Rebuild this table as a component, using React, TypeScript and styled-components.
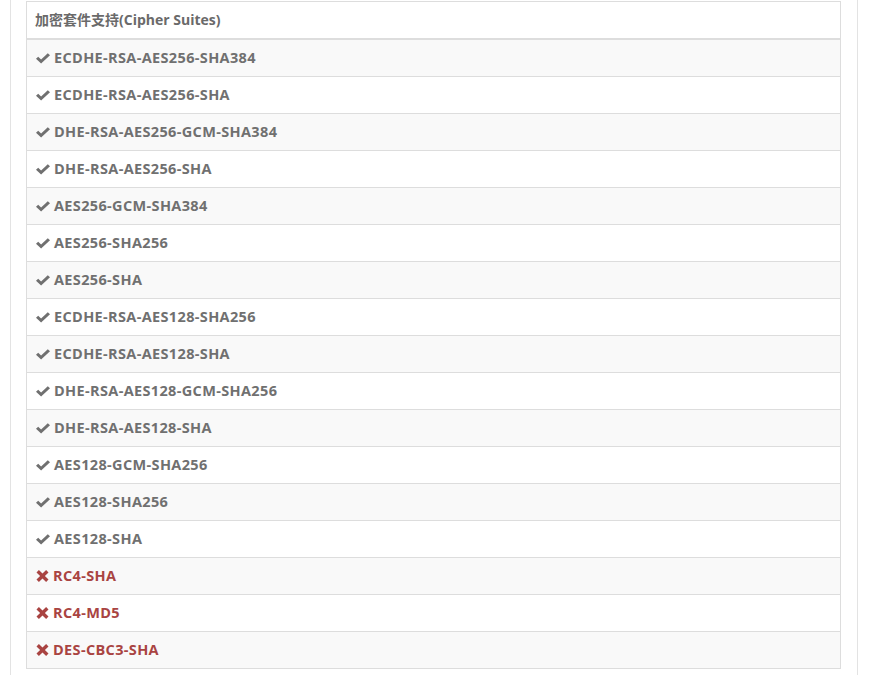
import React from "react";
import styled, { createGlobalStyle } from "styled-components";

const Global = createGlobalStyle`
  html, body { margin: 0; padding: 0; background: #fff; }
  body { font-family: "Open Sans", "Noto Sans CJK SC", sans-serif; }
`;

const Panel = styled.div`
  box-sizing: border-box;
  margin-left: 10px;
  width: 848px;
  min-height: 675px;
  border-left: 1px solid #e3e3e3;
  border-right: 1px solid #e3e3e3;
  padding: 1px 16px 0 15px;
`;

const Table = styled.table`
  width: 815px;
  border-collapse: collapse;
  border: 1px solid #ddd;
  font-size: 14.5px;
  line-height: 20px;
`;

const Th = styled.th`
  text-align: left;
  padding: 8px 8px;
  height: 20px;
  border: 1px solid #ddd;
  border-bottom: 2px solid #ddd;
  font-size: 14px;
  font-weight: 700;
  color: #6a6a6a;
  background: #fff;
`;

const Row = styled.tr<{ $striped: boolean }>`
  background: ${(p) => (p.$striped ? "#f9f9f9" : "#fff")};
`;

const Td = styled.td<{ $bad: boolean }>`
  padding: 8px 9px;
  border: 1px solid #ddd;
  font-weight: 700;
  letter-spacing: 0.35px;
  color: ${(p) => (p.$bad ? "#a94442" : "#707070")};
`;

const Label = styled.div`
  display: flex;
  align-items: center;
  height: 20px;
  gap: 4px;
`;

const Icon = styled.svg`
  display: block;
  flex: none;
`;

const Check = () => (
  <Icon width="14" height="11" viewBox="0 0 14 11">
    <polygon points="0,5.8 2.2,3.7 5.1,6.5 11.8,0.2 14,2.3 5.1,10.6" fill="currentColor" />
  </Icon>
);

const Cross = () => (
  <Icon width="13" height="12" viewBox="0 0 13 12">
    <polygon
      points="0.5,2.4 2.9,0 6.5,3.6 10.1,0 12.5,2.4 8.9,6 12.5,9.6 10.1,12 6.5,8.4 2.9,12 0.5,9.6 4.1,6"
      fill="currentColor"
    />
  </Icon>
);

const suites: [string, boolean][] = [
  ["ECDHE-RSA-AES256-SHA384", true],
  ["ECDHE-RSA-AES256-SHA", true],
  ["DHE-RSA-AES256-GCM-SHA384", true],
  ["DHE-RSA-AES256-SHA", true],
  ["AES256-GCM-SHA384", true],
  ["AES256-SHA256", true],
  ["AES256-SHA", true],
  ["ECDHE-RSA-AES128-SHA256", true],
  ["ECDHE-RSA-AES128-SHA", true],
  ["DHE-RSA-AES128-GCM-SHA256", true],
  ["DHE-RSA-AES128-SHA", true],
  ["AES128-GCM-SHA256", true],
  ["AES128-SHA256", true],
  ["AES128-SHA", true],
  ["RC4-SHA", false],
  ["RC4-MD5", false],
  ["DES-CBC3-SHA", false],
];

export default function App() {
  return (
    <>
      <Global />
      <Panel>
        <Table>
          <thead>
            <tr>
              <Th>加密套件支持(Cipher Suites)</Th>
            </tr>
          </thead>
          <tbody>
            {suites.map(([name, ok], i) => (
              <Row key={name} $striped={i % 2 === 0}>
                <Td $bad={!ok}>
                  <Label>
                    {ok ? <Check /> : <Cross />}
                    {name}
                  </Label>
                </Td>
              </Row>
            ))}
          </tbody>
        </Table>
      </Panel>
    </>
  );
}
